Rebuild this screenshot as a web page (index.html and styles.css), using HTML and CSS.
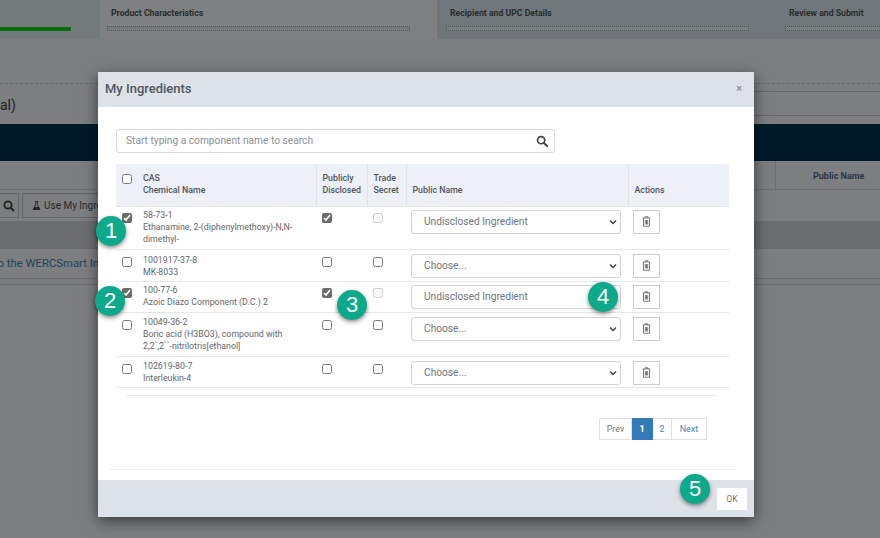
FILE: index.html
```html
<!DOCTYPE html>
<html lang="en">
<head>
<meta charset="utf-8">
<title>My Ingredients</title>
<link rel="stylesheet" href="styles.css">
</head>
<body>
<svg class="defs" width="0" height="0" aria-hidden="true">
  <symbol id="trash" viewBox="0 0 10 12"><path d="M3.6 1.6V.7h2.8v.9M.8 2h8.4M1.7 2.3v9h6.6v-9M3.7 4.4v4.9M5 4.4v4.9M6.3 4.4v4.9" fill="none" stroke="#444" stroke-width=".8"/></symbol>
  <symbol id="chev" viewBox="0 0 8 6"><path d="M1 1.5l3 3 3-3" fill="none" stroke="#3d4349" stroke-width="1.5"/></symbol>
</svg>
<div class="page">
  <div class="stepper">
    <div class="step step-done"><div class="bar-done"></div></div>
    <div class="step step-active"><div class="step-name">Product Characteristics</div><div class="bar"></div></div>
    <div class="step"><div class="step-name">Recipient and UPC Details</div><div class="bar"></div></div>
    <div class="step step-last"><div class="step-name">Review and Submit</div><div class="bar"></div></div>
  </div>
  <div class="dash-line"></div>
  <div class="title-row"><span class="title-text">al)</span><span class="title-field"></span></div>
  <div class="dark-band"></div>
  <div class="bg-head"><span class="bg-sep"></span><span class="bg-sep"></span><span class="bg-pub">Public Name</span></div>
  <div class="toolbar">
    <span class="tool-btn tool-search"><svg class="tool-icon" viewBox="0 0 12 12"><circle cx="5" cy="5" r="3.6" fill="none" stroke="#222" stroke-width="1.8"/><path d="M7.8 7.8L11 11" stroke="#222" stroke-width="2"/></svg></span>
    <span class="tool-btn tool-use"><svg class="flask" viewBox="0 0 10 10"><path d="M3 .6h4M4 1v3L1.3 9.4h7.4L6 4V1" fill="none" stroke="#222" stroke-width="1"/><path d="M2.6 6.6h4.8l1.3 2.8H1.3z" fill="#222"/></svg>Use My Ingredients</span>
  </div>
  <div class="grey-band"></div>
  <div class="info-row"><a class="info-link">to the WERCSmart Ingredients</a></div>
  <div class="info-row2"></div>
</div>

<div class="modal">
  <header class="modal-head">
    <h2 class="modal-title">My Ingredients</h2>
    <span class="modal-close">×</span>
  </header>
  <div class="modal-body">
    <div class="search">
      <input class="search-input" type="text" placeholder="Start typing a component name to search">
      <svg class="search-icon" viewBox="0 0 14 14"><circle cx="6" cy="6" r="4.2" fill="none" stroke="#3d4349" stroke-width="2"/><path d="M9.2 9.2L13 13" stroke="#3d4349" stroke-width="2.4" stroke-linecap="round"/></svg>
    </div>
    <table class="grid">
      <colgroup><col class="c-check"><col class="c-name"><col class="c-pub"><col class="c-trade"><col class="c-public"><col class="c-act"></colgroup>
      <thead>
        <tr>
          <th class="th-check"><input type="checkbox" class="cb"></th>
          <th class="sep">CAS<br>Chemical Name</th>
          <th class="sep">Publicly<br>Disclosed</th>
          <th class="sep">Trade<br>Secret</th>
          <th class="sep">Public Name</th>
          <th>Actions</th>
        </tr>
      </thead>
      <tbody>
        <tr class="r1">
          <td><input type="checkbox" class="cb" checked></td>
          <td>58-73-1<br>Ethanamine, 2-(diphenylmethoxy)-N,N-<br>dimethyl-</td>
          <td><input type="checkbox" class="cb" checked></td>
          <td><input type="checkbox" class="cb" disabled></td>
          <td><span class="sel-wrap"><select class="sel"><option>Undisclosed Ingredient</option></select><svg class="chev"><use href="#chev"/></svg></span></td>
          <td><span class="trash"><svg><use href="#trash"/></svg></span></td>
        </tr>
        <tr class="r2">
          <td><input type="checkbox" class="cb"></td>
          <td>1001917-37-8<br>MK-8033</td>
          <td><input type="checkbox" class="cb"></td>
          <td><input type="checkbox" class="cb"></td>
          <td><span class="sel-wrap"><select class="sel"><option>Choose...</option></select><svg class="chev"><use href="#chev"/></svg></span></td>
          <td><span class="trash"><svg><use href="#trash"/></svg></span></td>
        </tr>
        <tr class="r3">
          <td><input type="checkbox" class="cb" checked></td>
          <td>100-77-6<br>Azoic Diazo Component (D.C.) 2</td>
          <td><input type="checkbox" class="cb" checked></td>
          <td><input type="checkbox" class="cb" disabled></td>
          <td><input class="sel" type="text" value="Undisclosed Ingredient" readonly></td>
          <td><span class="trash"><svg><use href="#trash"/></svg></span></td>
        </tr>
        <tr class="r4">
          <td><input type="checkbox" class="cb"></td>
          <td>10049-36-2<br>Boric acid (H3BO3), compound with<br>2,2`,2``-nitrilotris[ethanol]</td>
          <td><input type="checkbox" class="cb"></td>
          <td><input type="checkbox" class="cb"></td>
          <td><span class="sel-wrap"><select class="sel"><option>Choose...</option></select><svg class="chev"><use href="#chev"/></svg></span></td>
          <td><span class="trash"><svg><use href="#trash"/></svg></span></td>
        </tr>
        <tr class="r5">
          <td><input type="checkbox" class="cb"></td>
          <td>102619-80-7<br>Interleukin-4</td>
          <td><input type="checkbox" class="cb"></td>
          <td><input type="checkbox" class="cb"></td>
          <td><span class="sel-wrap"><select class="sel"><option>Choose...</option></select><svg class="chev"><use href="#chev"/></svg></span></td>
          <td><span class="trash"><svg><use href="#trash"/></svg></span></td>
        </tr>
      </tbody>
    </table>
    <div class="rule"></div>
    <nav class="pager">
      <a class="pg pg-prev">Prev</a><a class="pg pg-cur">1</a><a class="pg pg-two">2</a><a class="pg pg-next">Next</a>
    </nav>
    <div class="rule-low"></div>
  </div>
  <footer class="modal-foot"><button class="ok" type="button">OK</button></footer>
</div>

<span class="badge b1">1</span>
<span class="badge b2">2</span>
<span class="badge b3">3</span>
<span class="badge b4">4</span>
<span class="badge b5">5</span>
</body>
</html>
```
FILE: styles.css
```css
* { box-sizing: border-box; }
html, body { margin: 0; padding: 0; }
body {
  position: relative;
  width: 880px;
  height: 538px;
  overflow: hidden;
  background: #7c7e7f;
  font-family: Roboto, "Liberation Sans", sans-serif;
}
.defs { position: absolute; }
.page { width: 880px; height: 538px; overflow: hidden; }

/* background page */
.stepper { display: flex; height: 39px; background: #70777a; }
.step { width: 339px; padding: 8px 0 0 13px; flex: none; }
.step-done { width: 100px; padding: 27px 0 0; background: #727a7b; }
.step-active { width: 337px; padding-left: 11px; background: #7e8082; }
.step-last { width: 104px; }
.bar-done { width: 71px; height: 4px; background: #0a6b10; }
.step-name { font-size: 8.7px; font-weight: 700; color: #2a2d2f; line-height: 10px; white-space: nowrap; }
.bar { width: 303px; height: 5px; margin: 8px 0 0 -4px; border: 1px dotted #53575a; background: #787c7d; }
.dash-line { height: 1px; margin-top: 44px; border-top: 1px dashed #686a6b; }
.title-row { height: 25px; margin-top: 7px; display: flex; justify-content: space-between; }
.title-text { font-size: 14px; color: #222; line-height: 28px; }
.title-field { width: 380px; height: 25px; border: solid #686a6b; border-width: 1px 0; }
.dark-band { height: 37px; margin-top: 8px; background: #001a2a; }
.bg-head { height: 29px; display: flex; align-items: center; justify-content: flex-end; border-bottom: 1px solid #6e7071; }
.bg-sep { width: 33px; height: 29px; border-left: 1px solid #6e7071; flex: none; }
.bg-pub { width: 72px; padding: 2px 0 0 5px; font-size: 9px; font-weight: 700; color: #2b3648; flex: none; }
.toolbar { height: 31px; display: flex; gap: 3px; padding-top: 3px; }
.tool-btn { height: 25px; border: 1px solid #626465; display: flex; align-items: center; font-size: 10px; color: #2a2a2a; }
.tool-search { width: 20px; margin-left: -1px; justify-content: center; }
.tool-icon { width: 12px; height: 12px; }
.tool-use { padding-left: 9px; width: 110px; flex: none; white-space: nowrap; overflow: hidden; }
.flask { width: 9px; height: 9px; margin-right: 3px; }
.grey-band { height: 28px; background: #6c6e6f; }
.info-row { height: 30px; line-height: 26px; border-bottom: 1px solid #6e7071; margin-left: -6px; white-space: nowrap; }
.info-link { font-size: 11.3px; color: #24445f; }
.info-row2 { height: 6px; border-bottom: 1px solid #6e7071; }

/* modal */
.modal {
  position: absolute;
  left: 98px;
  top: 72px;
  width: 656px;
  height: 445px;
  display: flex;
  flex-direction: column;
  background: #fff;
  box-shadow: 0 4px 14px rgba(0, 0, 0, .55);
}
.modal-head { height: 35px; flex: none; display: flex; align-items: center; justify-content: space-between; padding: 0 12px 2px 7px; background: #dde1e8; }
.modal-title { margin: 0; font-size: 13px; font-weight: 500; color: #4f5760; }
.modal-close { font-size: 11px; font-weight: 700; color: #91969c; }
.modal-body { flex: 1; position: relative; padding: 22px 25px 0 18px; }
.search { width: 439px; height: 24px; position: relative; display: flex; }
.search-input { flex: 1; height: 24px; border: 1px solid #d6d9de; border-radius: 3px; padding: 0 9px 1px; font: 10.2px Roboto, sans-serif; outline: 0; }
.search-input::placeholder { color: #8b9095; opacity: 1; }
.search-icon { position: absolute; right: 7px; top: 6px; width: 12px; height: 12px; }

.grid { width: 613px; margin-top: 11px; table-layout: fixed; border-collapse: collapse; font-size: 8.8px; line-height: 12.4px; color: #62676d; }
.c-check { width: 21px; } .c-name { width: 179px; } .c-pub { width: 51px; } .c-trade { width: 39px; } .c-public { width: 222px; } .c-act { width: 101px; }
.grid thead tr { height: 42px; background: #edf0f6; border-bottom: 1px solid #dfe3ea; }
.grid th { text-align: left; font-weight: 500; font-size: 8.8px; color: #50565c; padding: 0 6px 9px; vertical-align: bottom; }
.grid th.th-check { padding: 10px 0 0 6px; vertical-align: top; }
.grid th.sep { border-right: 1px solid #dfe3ea; }
.grid tbody tr { border-bottom: 1px solid #e4e6ea; }
.grid td { padding: 3px 6px 0; vertical-align: top; }
.grid td:first-child { padding-left: 6px; padding-right: 0; }
.grid td:nth-child(5), .grid td:nth-child(6) { padding-left: 5px; padding-right: 0; }
.grid .r2 td, .grid .r4 td, .grid .r5 td { padding-top: 4px; }
.grid .r1 td:nth-child(2), .grid .r3 td:nth-child(2) { padding-top: 2px; }
.grid .r4 td:nth-child(2), .grid .r5 td:nth-child(2) { padding-top: 3px; }
.r1 { height: 43px; }
.r2 { height: 32px; }
.r3 { height: 31px; }
.r4 { height: 44px; }
.r5 { height: 31px; }
.cb { display: block; width: 10px; height: 10px; margin: 3px 0 0; accent-color: #6b6b6b; }
th .cb { margin: 0; }
.sel-wrap { display: block; position: relative; width: 210px; }
.sel { display: block; width: 210px; height: 24px; padding: 0 12px; border: 1px solid #d0d3d8; border-radius: 3px; background: #fff; appearance: none; font: 10.2px Roboto, sans-serif; color: #71767c; outline: 0; }
.chev { position: absolute; right: 4px; top: 9px; width: 8px; height: 6px; }
.trash { display: flex; width: 27px; height: 24px; align-items: center; justify-content: center; border: 1px solid #ccc; }
.trash svg { width: 9px; height: 11px; }
.rule { height: 1px; margin: 7px 12px 0 11px; background: #e4e6ea; }
.pager { display: flex; justify-content: flex-end; margin: 22px 22px 0 0; height: 22px; font-size: 9px; }
.pg { display: flex; align-items: center; justify-content: center; height: 22px; border: 1px solid #dee0e3; border-left-width: 0; color: #4a86c5; }
.pg-prev { width: 33px; border-left-width: 1px; color: #767a7f; }
.pg-cur { width: 21px; background: #337ab7; border-color: #337ab7; color: #fff; font-weight: 700; }
.pg-two { width: 19px; }
.pg-next { width: 35px; }
.rule-low { position: absolute; left: 12px; right: 18px; top: 362px; height: 1px; background: #eef0f2; }
.modal-foot { height: 37px; flex: none; display: flex; align-items: flex-start; justify-content: flex-end; padding: 8px 7px 0 0; background: #dde1e8; }
.ok { width: 30px; height: 22px; padding: 0; border: 0; background: #fff; font: 8.6px Roboto, sans-serif; color: #777; }

/* numbered callouts */
.badge {
  position: absolute;
  width: 30px;
  height: 30px;
  border-radius: 50%;
  display: flex;
  align-items: center;
  justify-content: center;
  background: #0ca98a;
  color: #fff;
  font: 22px "Liberation Sans", Arial, sans-serif;
  box-shadow: 0 2px 4px rgba(0, 0, 0, .45);
}
.b1 { left: 96px; top: 216px; }
.b2 { left: 95px; top: 286px; }
.b3 { left: 337px; top: 290px; }
.b4 { left: 588px; top: 282px; }
.b5 { left: 680px; top: 474px; }
```
